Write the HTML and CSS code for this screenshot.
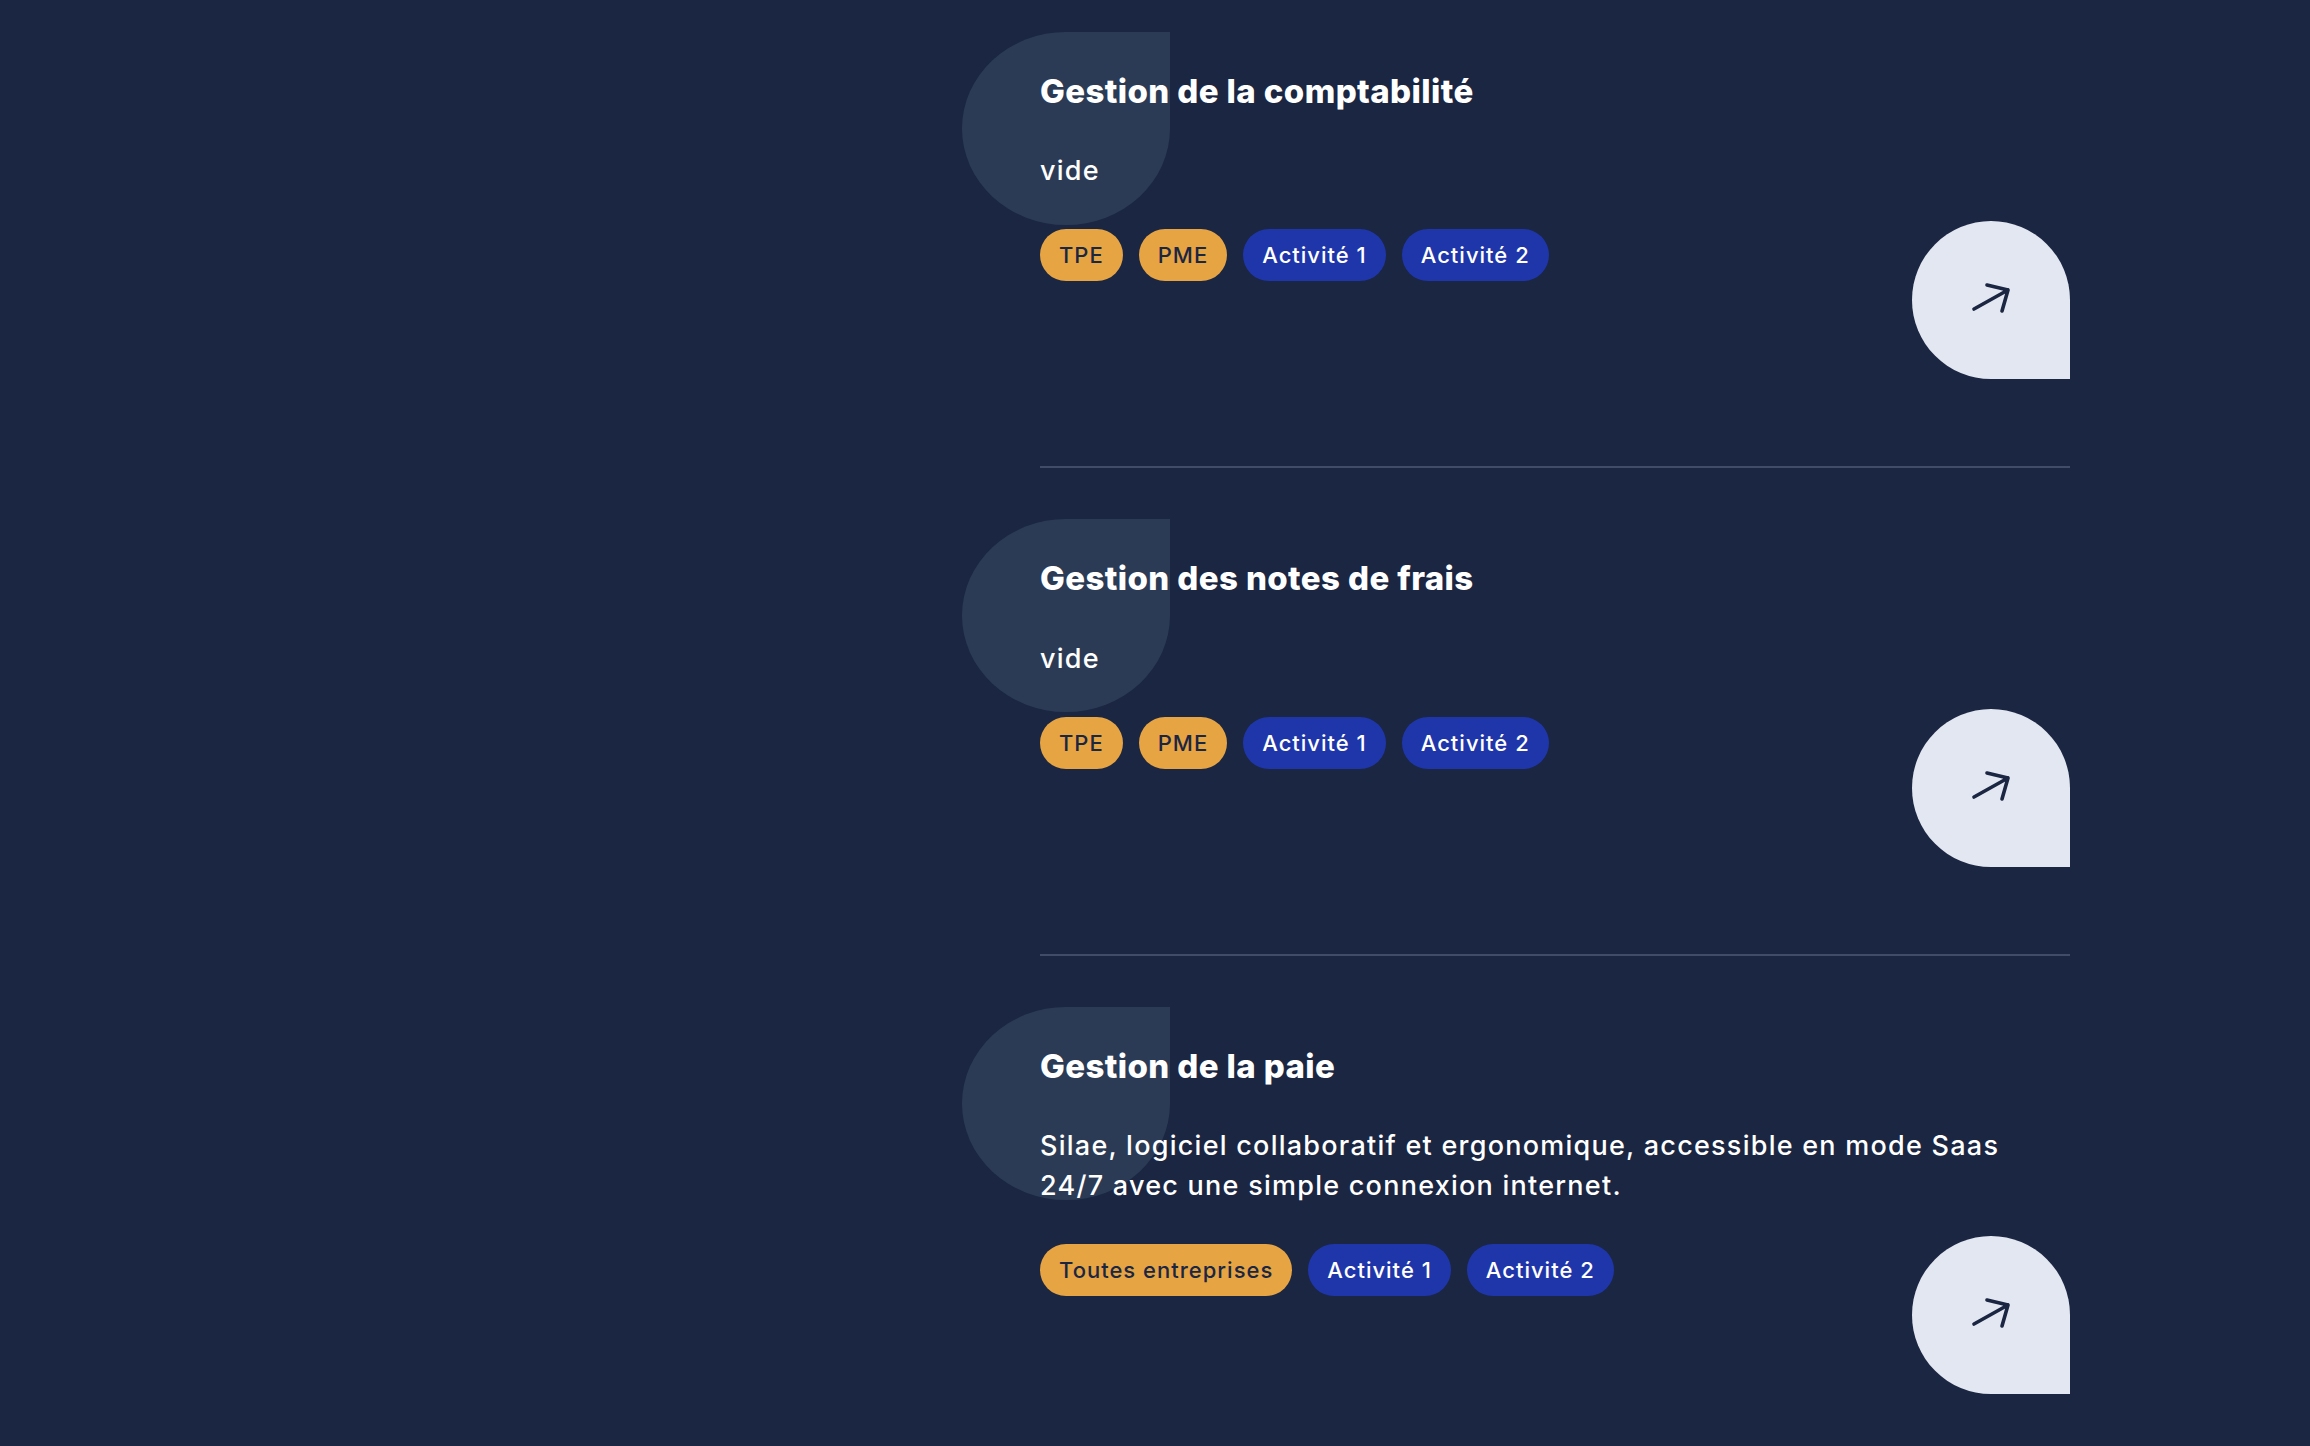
FILE: index.html
```html
<!DOCTYPE html>
<html lang="fr">
<head>
<meta charset="utf-8">
<title>Services</title>
<link rel="stylesheet" href="styles.css">
</head>
<body>
<main class="page">
  <div class="spacer"></div>
  <ul class="list">
    <li class="item">
      <div class="body">
        <span class="blob"></span>
        <h2 class="title">Gestion de la comptabilité</h2>
        <p class="desc">vide</p>
        <div class="footer">
          <div class="tags">
            <span class="tag tag-size">TPE</span>
            <span class="tag tag-size">PME</span>
            <span class="tag tag-act">Activité 1</span>
            <span class="tag tag-act">Activité 2</span>
          </div>
          <a class="go" href="#" aria-label="Voir">
            <svg viewBox="0 0 158 158" width="158" height="158"><path d="M62 88 L96 69 M75 64 L96 69 L90 90" fill="none" stroke="#1b2642" stroke-width="3.6" stroke-linecap="round" stroke-linejoin="round"/></svg>
          </a>
        </div>
      </div>
    </li>
    <li class="item">
      <div class="body">
        <span class="blob"></span>
        <h2 class="title">Gestion des notes de frais</h2>
        <p class="desc">vide</p>
        <div class="footer">
          <div class="tags">
            <span class="tag tag-size">TPE</span>
            <span class="tag tag-size">PME</span>
            <span class="tag tag-act">Activité 1</span>
            <span class="tag tag-act">Activité 2</span>
          </div>
          <a class="go" href="#" aria-label="Voir">
            <svg viewBox="0 0 158 158" width="158" height="158"><path d="M62 88 L96 69 M75 64 L96 69 L90 90" fill="none" stroke="#1b2642" stroke-width="3.6" stroke-linecap="round" stroke-linejoin="round"/></svg>
          </a>
        </div>
      </div>
    </li>
    <li class="item">
      <div class="body">
        <span class="blob"></span>
        <h2 class="title">Gestion de la paie</h2>
        <p class="desc">Silae, logiciel collaboratif et ergonomique, accessible en mode Saas 24/7 avec une simple connexion internet.</p>
        <div class="footer">
          <div class="tags">
            <span class="tag tag-size">Toutes entreprises</span>
            <span class="tag tag-act">Activité 1</span>
            <span class="tag tag-act">Activité 2</span>
          </div>
          <a class="go" href="#" aria-label="Voir">
            <svg viewBox="0 0 158 158" width="158" height="158"><path d="M62 88 L96 69 M75 64 L96 69 L90 90" fill="none" stroke="#1b2642" stroke-width="3.6" stroke-linecap="round" stroke-linejoin="round"/></svg>
          </a>
        </div>
      </div>
    </li>
  </ul>
</main>
</body>
</html>
```
FILE: styles.css
```css
html, body {
  margin: 0;
  padding: 0;
  background: #1b2642;
  height: 100%;
  overflow: hidden;
}
body {
  font-family: Inter, "Noto Sans", "Liberation Sans", sans-serif;
  color: #ffffff;
}
.page {
  display: grid;
  grid-template-columns: 1040px 1030px;
  min-height: 1446px;
}
.list {
  list-style: none;
  margin: 0;
  padding: 0;
}
.item {
  padding-top: 51px;
  padding-bottom: 87px;
  border-bottom: 2px solid #414d68;
}
.item:first-child {
  padding-top: 32px;
}
.body {
  position: relative;
  display: flow-root;
}
.blob {
  position: absolute;
  top: 0;
  left: -78px;
  width: 208px;
  height: 193px;
  background: #2b3b55;
  border-radius: 50% 0 50% 50%;
}
.title {
  position: relative;
  margin: 40px 0 0;
  font-size: 33px;
  line-height: 38.4px;
  font-weight: 800;
  letter-spacing: 0.4px;
}
.desc {
  position: relative;
  margin: 41px 0 0;
  font-size: 27px;
  line-height: 40px;
  font-weight: 500;
  letter-spacing: 1.25px;
  max-width: 1000px;
}
.footer {
  position: relative;
  margin-top: 30px;
  display: flex;
  justify-content: space-between;
  align-items: flex-start;
}
.tags {
  display: flex;
  gap: 16px;
  margin-top: 8px;
}
.tag {
  display: inline-flex;
  align-items: center;
  height: 52px;
  padding: 0 19px;
  border-radius: 26px;
  font-size: 22px;
  font-weight: 500;
  letter-spacing: 1px;
  box-sizing: border-box;
}
.tag-size {
  background: #e6a443;
  color: #1b2642;
}
.tag-act {
  background: #1f36aa;
  color: #ffffff;
}
.go {
  display: block;
  width: 158px;
  height: 158px;
  background: #e3e7f1;
  border-radius: 50% 50% 0 50%;
}
.go svg {
  display: block;
}
```
